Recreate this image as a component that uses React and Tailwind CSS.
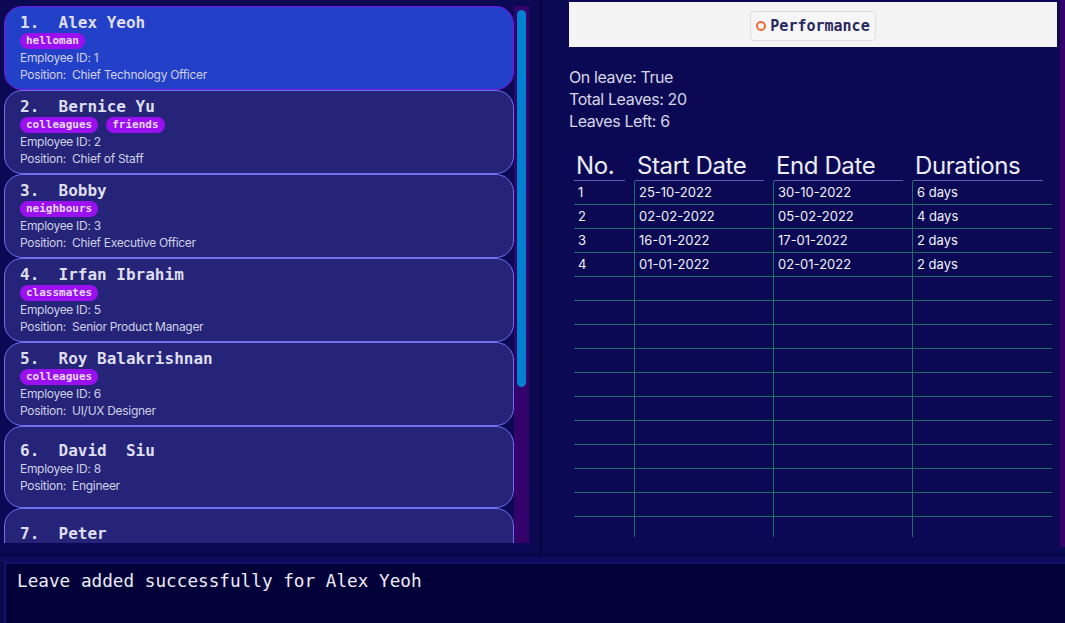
import React from "react";

const mono = { fontFamily: '"DejaVu Sans Mono", "Liberation Mono", monospace' };
const sans = { fontFamily: 'Inter, "Noto Sans", sans-serif' };

const employees = [
  { no: 1, name: "Alex Yeoh", tags: ["helloman"], id: 1, position: "Chief Technology Officer", selected: true },
  { no: 2, name: "Bernice Yu", tags: ["colleagues", "friends"], id: 2, position: "Chief of Staff" },
  { no: 3, name: "Bobby", tags: ["neighbours"], id: 3, position: "Chief Executive Officer" },
  { no: 4, name: "Irfan Ibrahim", tags: ["classmates"], id: 5, position: "Senior Product Manager" },
  { no: 5, name: "Roy Balakrishnan", tags: ["colleagues"], id: 6, position: "UI/UX Designer" },
  { no: 6, name: "David  Siu", tags: [], id: 8, position: "Engineer", short: true },
  { no: 7, name: "Peter", tags: [], id: 9, position: "Intern" },
];

const leaves = [
  ["1", "25-10-2022", "30-10-2022", "6 days"],
  ["2", "02-02-2022", "05-02-2022", "4 days"],
  ["3", "16-01-2022", "17-01-2022", "2 days"],
  ["4", "01-01-2022", "02-01-2022", "2 days"],
];

const EmployeeCard = ({ emp }) => (
  <div
    className={`flex shrink-0 flex-col justify-center rounded-[18px] border px-[15px] ${
      emp.short ? "h-[82px]" : "h-[84px]"
    } ${emp.selected ? "border-[#7a12e6] bg-[#2240c8]" : "border-[#6e6ef0] bg-[#262479]"}`}
  >
    <div className="whitespace-pre pt-[1px] text-[16px] font-bold leading-[18px] text-[#dedeee]" style={mono}>
      {`${emp.no}.  ${emp.name}`}
    </div>
    {emp.tags.length > 0 && (
      <div className="mt-[1px] flex gap-[8px]">
        {emp.tags.map((tag) => (
          <span
            key={tag}
            className="h-[16px] rounded-full bg-[#9a10f0] px-[6px] text-[11px] font-bold leading-[16px] text-[#e8d8f8]"
            style={mono}
          >
            {tag}
          </span>
        ))}
      </div>
    )}
    <div className="text-[12px] leading-[17px] tracking-[-0.3px] text-[#cfd0e6]" style={sans}>
      Employee ID: {emp.id}
    </div>
    <div className="whitespace-pre text-[12px] leading-[17px] tracking-[-0.3px] text-[#cfd0e6]" style={sans}>
      {`Position:  ${emp.position}`}
    </div>
  </div>
);

const TableRow = ({ cells, last }) => (
  <div className={`grid grid-cols-[60px_139px_139px_140px] ${last ? "h-[20px]" : "h-[24px] border-b border-[#1a6e6c]"}`}>
    {[0, 1, 2, 3].map((i) => (
      <div
        key={i}
        className={`pl-[4px] text-[13px] leading-[23px] text-[#f0f0f8] ${i > 0 ? "border-l border-[#1a6e6c]" : ""}`}
        style={sans}
      >
        {cells ? cells[i] : ""}
      </div>
    ))}
  </div>
);

export default function App() {
  const emptyRows = Array.from({ length: 10 });

  return (
    <div className="flex h-[623px] w-[1065px] flex-col overflow-hidden bg-[#0b0954]">
      <div className="flex h-[553px] shrink-0">
        {/* person list */}
        <div className="flex w-[539px] shrink-0 pb-[10px] pl-[4px] pr-[10px] pt-[6px]">
          <div className="flex w-[510px] flex-col overflow-hidden">
            {employees.map((emp) => (
              <EmployeeCard key={emp.no} emp={emp} />
            ))}
          </div>
          <div className="w-[15px] bg-[#33036b] px-[3px] pt-[4px]">
            <div className="h-[377px] rounded-full bg-[#0080d0]" />
          </div>
        </div>
        <div className="w-[3px] bg-[#060640]" />

        {/* leave panel */}
        <div className="flex flex-1">
          <div className="flex-1 pl-[27px] pr-[3px] pt-[2px]">
            <div className="flex h-[45px] items-center justify-center bg-[#f4f4f4]">
              <div className="mt-[3px] flex h-[30px] w-[126px] items-center justify-center gap-[4px] rounded-[4px] border border-[#dedede] bg-[#f6f6f6]">
                <span className="h-[10px] w-[10px] rounded-full border-[2.5px] border-[#f26a35]" />
                <span className="pt-[1px] text-[15px] font-bold text-[#28285e]" style={mono}>
                  Performance
                </span>
              </div>
            </div>

            <div className="mt-[19px] text-[16px] leading-[22px] tracking-[-0.4px] text-[#d6d6e8]" style={sans}>
              <div>On leave: True</div>
              <div>Total Leaves: 20</div>
              <div>Leaves Left: 6</div>
            </div>

            <div className="ml-[5px] mt-[18px] w-[478px]">
              <div className="grid h-[31px] grid-cols-[60px_139px_139px_140px]">
                {["No.", "Start Date", "End Date", "Durations"].map((h, i) => (
                  <div key={h} className={`pr-[9px] ${i > 0 ? "pl-[1px]" : ""}`}>
                    <div
                      className="h-[31px] border-b border-[#5c5cab] pl-[2px] text-[24px] leading-[31px] tracking-[-0.4px] text-[#ececf6]"
                      style={sans}
                    >
                      {h}
                    </div>
                  </div>
                ))}
              </div>
              {leaves.map((row) => (
                <TableRow key={row[0]} cells={row} />
              ))}
              {emptyRows.map((_, i) => (
                <TableRow key={`e${i}`} />
              ))}
              <TableRow last />
            </div>
          </div>
          <div className="h-[547px] w-[5px] bg-[#33036b]" />
        </div>
      </div>

      {/* command result */}
      <div className="h-[4px] shrink-0 bg-[#07074a]" />
      <div className="h-[5px] shrink-0 bg-[#0e0c5c]" />
      <div className="flex flex-1 bg-[#08084a] pl-[4px]">
        <div className="flex-1 border-l-2 border-t-2 border-[#14126a] bg-[#020038] pl-[11px] pt-[6px]">
          <div className="text-[17.7px] leading-[22px] text-[#ececf8]" style={mono}>
            Leave added successfully for Alex Yeoh
          </div>
        </div>
      </div>
    </div>
  );
}
